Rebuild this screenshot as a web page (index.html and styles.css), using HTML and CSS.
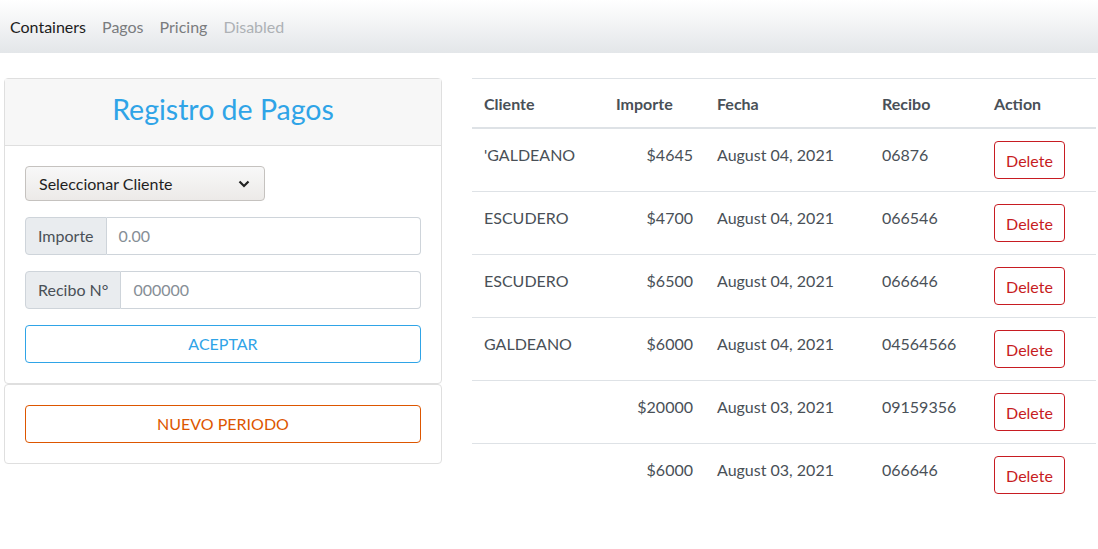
FILE: index.html
```html
<!DOCTYPE html>
<html lang="es">
<head>
<meta charset="utf-8">
<title>Registro de Pagos</title>
<link rel="stylesheet" href="styles.css">
</head>
<body>
<nav class="navbar">
  <a class="nav-link active">Containers</a>
  <a class="nav-link">Pagos</a>
  <a class="nav-link">Pricing</a>
  <a class="nav-link disabled">Disabled</a>
</nav>
<main class="main">
  <section class="left">
    <div class="card">
      <div class="card-header"><h3 class="title">Registro de Pagos</h3></div>
      <div class="card-body">
        <div class="select">
          <span>Seleccionar Cliente</span>
          <svg class="chev" width="12" height="8" viewBox="0 0 12 8"><polyline points="1.5,1.5 6,6 10.5,1.5" fill="none" stroke="#222" stroke-width="2.2"/></svg>
        </div>
        <div class="input-group">
          <span class="ig-text">Importe</span>
          <span class="ig-input">0.00</span>
        </div>
        <div class="input-group">
          <span class="ig-text">Recibo N°</span>
          <span class="ig-input">000000</span>
        </div>
        <button class="btn btn-primary">ACEPTAR</button>
      </div>
    </div>
    <div class="card">
      <div class="card-body">
        <button class="btn btn-warning">NUEVO PERIODO</button>
      </div>
    </div>
  </section>
  <section class="right">
    <table class="table">
      <colgroup>
        <col class="c1"><col class="c2"><col class="c3"><col class="c4"><col class="c5">
      </colgroup>
      <thead>
        <tr><th>Cliente</th><th>Importe</th><th>Fecha</th><th>Recibo</th><th>Action</th></tr>
      </thead>
      <tbody>
        <tr><td>'GALDEANO</td><td class="num">$4645</td><td>August 04, 2021</td><td>06876</td><td class="act"><button class="btn-del">Delete</button></td></tr>
        <tr><td>ESCUDERO</td><td class="num">$4700</td><td>August 04, 2021</td><td>066546</td><td class="act"><button class="btn-del">Delete</button></td></tr>
        <tr><td>ESCUDERO</td><td class="num">$6500</td><td>August 04, 2021</td><td>066646</td><td class="act"><button class="btn-del">Delete</button></td></tr>
        <tr><td>GALDEANO</td><td class="num">$6000</td><td>August 04, 2021</td><td>04564566</td><td class="act"><button class="btn-del">Delete</button></td></tr>
        <tr><td></td><td class="num">$20000</td><td>August 03, 2021</td><td>09159356</td><td class="act"><button class="btn-del">Delete</button></td></tr>
        <tr><td></td><td class="num">$6000</td><td>August 03, 2021</td><td>066646</td><td class="act"><button class="btn-del">Delete</button></td></tr>
      </tbody>
    </table>
  </section>
</main>
</body>
</html>
```
FILE: styles.css
```css
* { box-sizing: border-box; }
html, body { margin: 0; padding: 0; }
body {
  font-family: "Lato", "Open Sans", sans-serif;
  font-size: 16px;
  line-height: 24px;
  color: #495057;
  background: #fff;
}
.navbar {
  height: 53px;
  display: flex;
  align-items: center;
  padding: 0 2px;
  background: linear-gradient(#ffffff, #f4f5f6 40%, #e3e6e9);
}
.nav-link {
  padding: 0 8px;
  color: #7a7c7e;
  text-decoration: none;
}
.nav-link.active { color: #1c1c1c; }
.nav-link.disabled { color: #adb1b5; }
.main {
  display: flex;
  align-items: flex-start;
  gap: 30px;
  padding: 25px 2px 0 4px;
}
.left { width: 438px; flex: none; }
.right { flex: 1; }
.card {
  border: 1px solid #dfdfdf;
  border-radius: 4px;
  background: #fff;
}
.card-header {
  background: #f7f7f7;
  border-bottom: 1px solid #dfdfdf;
  padding: 13px 20px 0;
  height: 67px;
  text-align: center;
}
.title {
  margin: 0;
  font-weight: 400;
  font-size: 28.5px;
  line-height: 34px;
  color: #2fa4e7;
}
.card-body { padding: 20px; }
.select {
  width: 240px;
  height: 35px;
  display: flex;
  align-items: center;
  justify-content: space-between;
  padding: 0 14px 0 13px;
  border: 1px solid #c5c2bf;
  border-radius: 4px;
  background: linear-gradient(#f8f8f8, #eceae8);
  color: #1f1f1f;
  margin-bottom: 16px;
}
.chev { margin-top: 1px; }
.input-group {
  display: flex;
  height: 38px;
  margin-bottom: 16px;
}
.ig-text {
  display: flex;
  align-items: center;
  padding: 0 12px;
  background: #e9ecef;
  border: 1px solid #ced4da;
  border-radius: 4px 0 0 4px;
  color: #495057;
}
.ig-input {
  flex: 1;
  display: flex;
  align-items: center;
  padding: 0 12px;
  border: 1px solid #ced4da;
  border-left: 0;
  border-radius: 0 4px 4px 0;
  color: #868e96;
}
.btn {
  display: block;
  width: 100%;
  height: 38px;
  font: inherit;
  background: #fff;
  border: 1px solid;
  border-radius: 4px;
  padding: 0;
}
.btn-primary { color: #2fa4e7; border-color: #2fa4e7; }
.btn-warning { color: #dd5600; border-color: #dd5600; }
.table {
  width: 100%;
  border-collapse: collapse;
  table-layout: fixed;
}
.c1 { width: 132px; }
.c2 { width: 101px; }
.c3 { width: 165px; }
.c4 { width: 112px; }
.c5 { width: auto; }
.table th, .table td {
  padding: 14px 12px 10px;
  text-align: left;
  vertical-align: top;
  border-top: 1px solid #dee2e6;
}
.table th {
  padding: 13px 12px 11px;
  font-weight: 700;
  border-bottom: 2px solid #dee2e6;
}
.table td.num { text-align: right; }
.table td.act { padding: 12px; }
.btn-del {
  font: inherit;
  color: #c71c22;
  background: #fff;
  border: 1px solid #c71c22;
  border-radius: 4px;
  height: 38px;
  width: 71px;
  padding: 1px 0 0;
  display: block;
}
```
